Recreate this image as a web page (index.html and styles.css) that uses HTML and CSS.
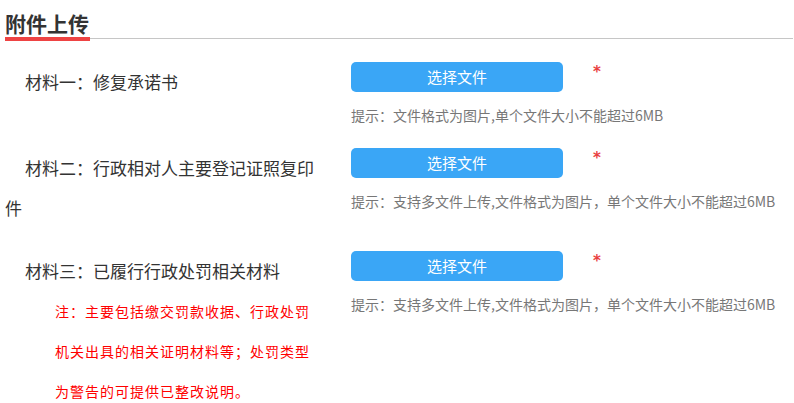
FILE: index.html
```html
<!DOCTYPE html>
<html lang="zh-CN">
<head>
<meta charset="utf-8">
<title>附件上传</title>
<link rel="stylesheet" href="styles.css">
</head>
<body>
<div class="header">
  <h2 class="title">附件上传</h2>
</div>
<div class="rows">
  <div class="row">
    <div class="label">材料一：修复承诺书</div>
    <div class="field">
      <div class="btn-line">
        <button class="btn">选择文件</button>
        <span class="req">*</span>
      </div>
      <div class="hint">提示：文件格式为图片,单个文件大小不能超过6MB</div>
    </div>
  </div>
  <div class="row">
    <div class="label">材料二：行政相对人主要登记证照复印件</div>
    <div class="field">
      <div class="btn-line">
        <button class="btn">选择文件</button>
        <span class="req">*</span>
      </div>
      <div class="hint">提示：支持多文件上传,文件格式为图片，单个文件大小不能超过6MB</div>
    </div>
  </div>
  <div class="row">
    <div class="label">材料三：已履行行政处罚相关材料
      <div class="note">注：主要包括缴交罚款收据、行政处罚机关出具的相关证明材料等；处罚类型为警告的可提供已整改说明。</div>
    </div>
    <div class="field">
      <div class="btn-line">
        <button class="btn">选择文件</button>
        <span class="req">*</span>
      </div>
      <div class="hint">提示：支持多文件上传,文件格式为图片，单个文件大小不能超过6MB</div>
    </div>
  </div>
</div>
</body>
</html>
```

FILE: styles.css
```css
html, body {
  margin: 0;
  padding: 0;
  background: #fff;
}
body {
  font-family: "Noto Sans CJK SC", "Noto Sans", sans-serif;
  color: #333;
  overflow: hidden;
}
.header {
  display: flex;
  align-items: flex-end;
  margin: 9px 1px 0 5px;
}
.header::after {
  content: "";
  flex: 1;
  border-bottom: 1px solid #c6c6c6;
  margin-bottom: 2px;
}
.title {
  margin: 0;
  font-size: 21px;
  font-weight: bold;
  line-height: 28px;
  color: #333;
  border-bottom: 4px solid #ee4343;
  padding-right: 1px;
}
.rows {
  margin-top: 21px;
}
.row {
  display: flex;
  align-items: flex-start;
  margin-bottom: 23px;
}
.label {
  width: 316px;
  margin-left: 5px;
  font-size: 17px;
  line-height: 40px;
  text-indent: 20px;
  color: #333;
}
.note {
  text-indent: 0;
  margin-left: 50px;
  width: 258px;
  font-size: 14px;
  letter-spacing: 1px;
  line-height: 40px;
  color: #ff0000;
}
.field {
  margin-left: 30px;
}
.btn-line {
  display: flex;
  align-items: flex-start;
}
.btn {
  width: 212px;
  height: 30px;
  border: none;
  border-radius: 5px;
  background: #3aa6f6;
  color: #fff;
  font-family: "Noto Sans CJK SC", sans-serif;
  font-size: 15px;
  padding: 0;
  line-height: 30px;
}
.req {
  margin-left: 30px;
  color: #e94040;
  font-family: "DejaVu Sans", sans-serif;
  font-size: 15px;
  font-weight: bold;
  line-height: 20px;
}
.hint {
  margin-top: 13px;
  font-size: 14px;
  line-height: 20px;
  color: #777;
}
```
